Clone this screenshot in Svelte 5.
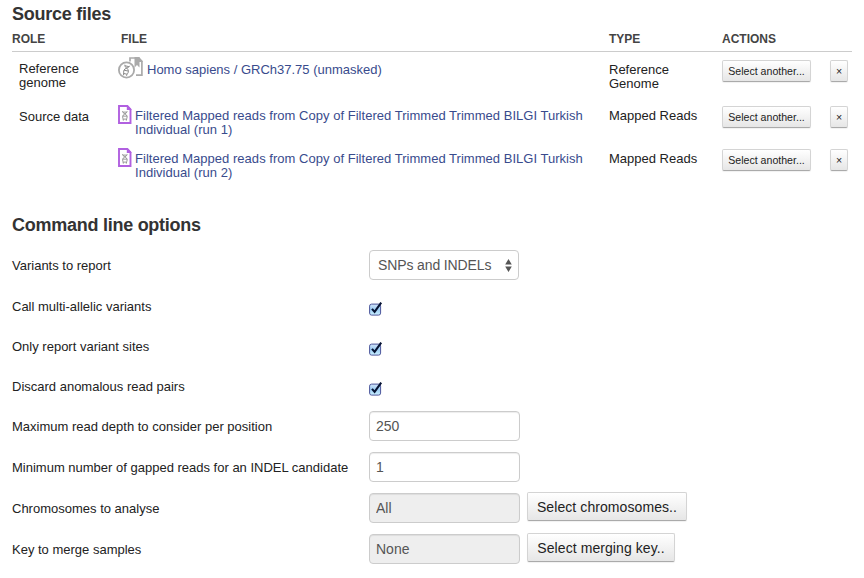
<script>
  const files = [
    { role: 'Reference genome', kind: 'genome', name: ['Homo sapiens / GRCh37.75 (unmasked)'], type: 'Reference Genome', height: 46 },
    { role: 'Source data', kind: 'reads', name: ['Filtered Mapped reads from Copy of Filtered Trimmed Trimmed BILGI Turkish', 'Individual (run 1)'], type: 'Mapped Reads', height: 43 },
    { role: '', kind: 'reads', name: ['Filtered Mapped reads from Copy of Filtered Trimmed Trimmed BILGI Turkish', 'Individual (run 2)'], type: 'Mapped Reads', height: 43 }
  ];
  const options = [
    { label: 'Variants to report', kind: 'select', value: 'SNPs and INDELs' },
    { label: 'Call multi-allelic variants', kind: 'check' },
    { label: 'Only report variant sites', kind: 'check' },
    { label: 'Discard anomalous read pairs', kind: 'check' },
    { label: 'Maximum read depth to consider per position', kind: 'text', value: '250' },
    { label: 'Minimum number of gapped reads for an INDEL candidate', kind: 'text', value: '1' },
    { label: 'Chromosomes to analyse', kind: 'pick', value: 'All', button: 'Select chromosomes..', width: 160 },
    { label: 'Key to merge samples', kind: 'pick', value: 'None', button: 'Select merging key..', width: 148 }
  ];
</script>

{#snippet helix()}
  <path d="M.6 0C.6 2.8 5.6 3 5.6 6C5.6 8 4.6 8.5 4.6 10.5M5.6 0C5.6 2.8 .8 3 .8 6C.8 8 1.6 8.5 1.6 10.5M1.2 1H5M1 5.5H5.4M1.4 8.8H4.8" fill="none" stroke="#858585" stroke-width=".9" />
{/snippet}

<main>
  <h2>Source files</h2>
  <div class="row head">
    <span>ROLE</span><span>FILE</span><span>TYPE</span><span>ACTIONS</span>
  </div>
  <section class="files">
    {#each files as file}
      <div class="row" style="height: {file.height}px">
        <div class="role" class:narrow={file.kind === 'genome'}>{file.role}</div>
        <div class="file">
          {#if file.kind === 'genome'}
            <svg class="genome" width="26" height="24" viewBox="0 0 26 24">
              <path d="M12 4.5V1H20.5L23.9 4.5V18.2H18" fill="none" stroke="#aaa" stroke-width="1.7" />
              <path d="M16.5 0H21.5V10.5L19 8L16.5 10.5Z" fill="#aaa" />
              <path d="M20 0V5H24.7V4L21 0Z" fill="#aaa" />
              <circle cx="8.5" cy="13" r="7.6" fill="#fff" stroke="#aaa" stroke-width="1.8" />
              <g transform="translate(6.2 7.6) rotate(12)">{@render helix()}</g>
            </svg>
          {:else}
            <svg class="reads" width="14" height="20" viewBox="0 0 14 20">
              <path d="M1 1H9.3L12.5 4.5V18H1Z" fill="#fff" stroke="#b160e0" stroke-width="1.9" />
              <path d="M8.8 0V5H13.4V4L9.5 0Z" fill="#b160e0" />
              <g transform="translate(3.8 6.2) scale(.97 .9)">{@render helix()}</g>
            </svg>
          {/if}
          <a class={file.kind} href="#file">{#each file.name as line}<span>{line}</span>{/each}</a>
        </div>
        <div class="type" class:narrow={file.kind === 'genome'}>{file.type}</div>
        <div class="actions">
          <button class="small">Select another...</button>
          <button class="small remove">×</button>
        </div>
      </div>
    {/each}
  </section>

  <h2 class="options-title">Command line options</h2>
  {#each options as option}
    <div class="option" class:short={option.kind === 'check'}>
      <span class="label">{option.label}</span>
      {#if option.kind === 'select'}
        <div class="select">
          <span>{option.value}</span>
          <svg width="7" height="13" viewBox="0 0 7 13"><path d="M3.5 0L6.8 5.4H.2ZM3.5 13L6.8 7.6H.2Z" fill="#555" /></svg>
        </div>
      {:else if option.kind === 'check'}
        <svg class="check" width="14" height="15" viewBox="0 0 14 15">
          <defs>
            <linearGradient id="aqua" x2="0" y2="1">
              <stop offset="0" stop-color="#d2e3f6" />
              <stop offset=".5" stop-color="#9dcdf5" />
              <stop offset="1" stop-color="#cbf2ff" />
            </linearGradient>
          </defs>
          <rect x=".6" y="2.1" width="11" height="11" rx="2" fill="url(#aqua)" stroke="#4c569b" />
          <path d="M3 6.9L5.6 9.9L12.2 .6" fill="none" stroke="#071333" stroke-width="2.1" />
        </svg>
      {:else}
        <input value={option.value} disabled={option.kind === 'pick'} />
        {#if option.button}
          <button class="large" style="width: {option.width}px">{option.button}</button>
        {/if}
      {/if}
    </div>
  {/each}
</main>

<style>
  :global(body) { background: #fff; }
  main {
    box-sizing: border-box;
    width: 864px;
    height: 578px;
    padding: 4px 12px 0;
    overflow: hidden;
    font: 13px/14px "Liberation Sans", Arial, sans-serif;
    color: #222;
  }
  h2 { margin: 0; font-size: 18px; line-height: 20px; letter-spacing: -.26px; color: #333; }
  .row { display: grid; grid-template-columns: 106px 491px 113px 130px; }
  .head {
    height: 28px;
    box-sizing: border-box;
    padding-top: 8px;
    border-bottom: 1px solid #ccc;
    font-weight: bold;
    font-size: 12px;
    color: #444;
  }
  .head span:nth-child(2) { padding-left: 3px; }
  .files { padding-top: 5px; height: 163px; box-sizing: border-box; }
  .role { padding: 7px 0 0 7px; white-space: nowrap; }
  .role.narrow { width: 70px; padding-top: 5px; white-space: normal; }
  .file { display: flex; align-items: flex-start; }
  .genome { flex: none; }
  svg.genome { margin-right: 3px; }
  svg.reads { margin: 2px 3px 0 0; }
  a { padding-top: 6px; color: #394b8d; text-decoration: none; white-space: nowrap; }
  a.reads { letter-spacing: .028px; }
  a span { display: block; }
  .type { padding-top: 6px; white-space: nowrap; }
  .type.narrow { width: 80px; white-space: normal; }
  .actions { display: flex; gap: 19px; padding-top: 3px; }
  button {
    box-sizing: border-box;
    padding: 0;
    border: 1px solid #d4d4d4;
    border-bottom-color: #aaa;
    border-radius: 2px;
    background: linear-gradient(#fff, #e6e6e6);
    box-shadow: 0 1px 1px rgba(0, 0, 0, .06);
    color: #222;
    font-family: inherit;
    white-space: nowrap;
  }
  .small { width: 89px; height: 22px; font-size: 10.6px; line-height: 18px; }
  .remove { width: 18px; }
  .options-title { margin-bottom: 15px; }
  .option { display: flex; align-items: flex-start; height: 41px; }
  .short { height: 40px; }
  .label { width: 357px; line-height: 20px; padding-top: 6px; }
  .select, input {
    box-sizing: border-box;
    width: 151px;
    height: 30px;
    margin: 0;
    padding: 0 6px;
    border: 1px solid #ccc;
    border-radius: 4px;
    background: #fff;
    color: #555;
    font: 14px/28px "Liberation Sans", Arial, sans-serif;
  }
  input { box-shadow: inset 0 1px 1px rgba(0, 0, 0, .075); }
  input:disabled { background: #eee; }
  .select { width: 150px; padding-left: 8px; letter-spacing: -.12px; display: flex; justify-content: space-between; align-items: center; }
  .check { margin-top: 11px; }
  .large { height: 29px; margin: -1px 0 0 7px; font-size: 14px; letter-spacing: .08px; }
</style>
